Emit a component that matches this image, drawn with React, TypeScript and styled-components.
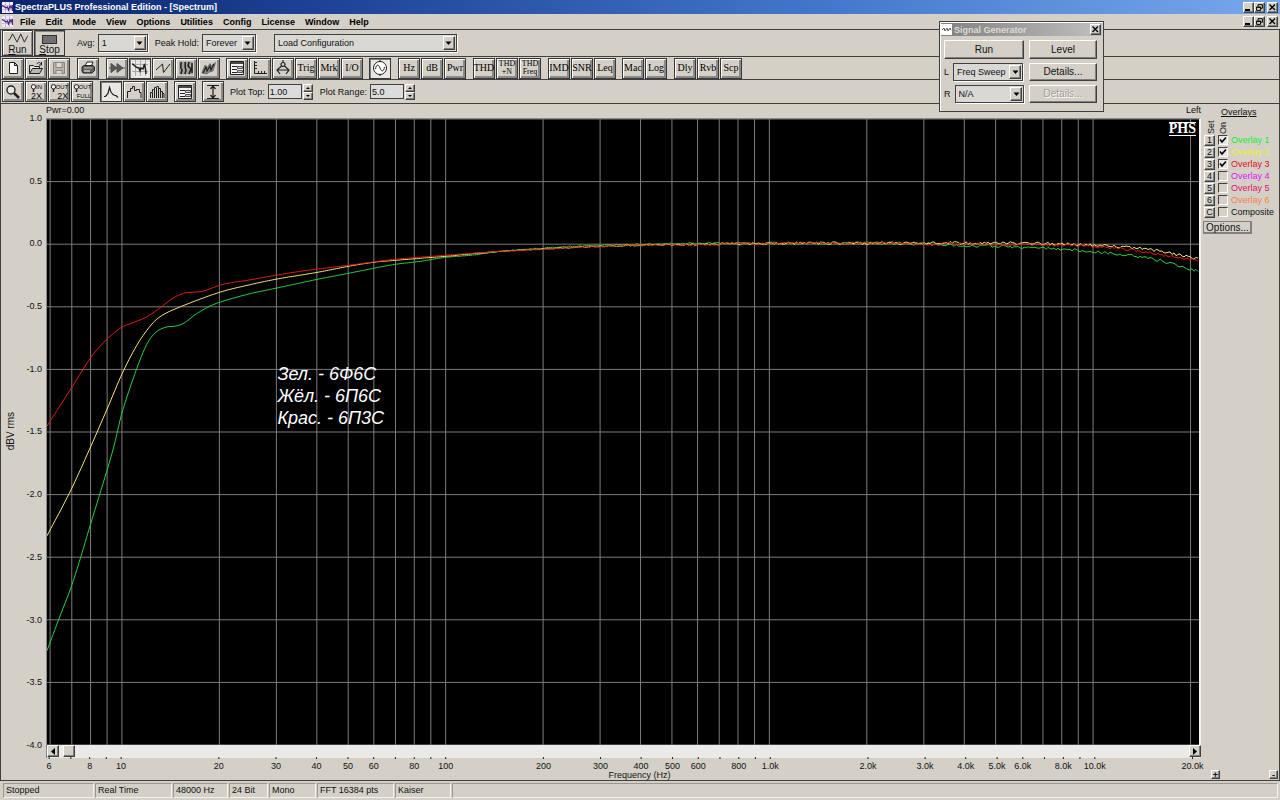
import React, { useState } from 'react';
import styled, { createGlobalStyle, css } from 'styled-components';

const face = '#d4d0c8';
const dark = '#404040';
const shade = '#808080';

const GlobalStyle = createGlobalStyle`
  * { box-sizing: border-box; }
  body { margin: 0; background: ${face}; }
  body, button, input, select {
    font-family: "Liberation Sans", Arial, sans-serif;
    font-size: 9px;
    line-height: 12px;
    color: #101010;
  }
  button, input, select { margin: 0; padding: 0; border-radius: 0; }
  svg { display: block; }
`;

const raised = css`
  border: 1px solid;
  border-color: #fff ${dark} ${dark} #fff;
  box-shadow: inset -1px -1px 0 ${shade};
  background: ${face};
`;
const sunken = css`
  border: 1px solid;
  border-color: ${dark} #fff #fff ${dark};
  background: ${face};
`;

const Shell = styled.div`
  position: relative;
  display: flex;
  flex-direction: column;
  min-height: 100vh;
  background: ${face};
`;
const TitleBar = styled.header`
  display: flex;
  align-items: center;
  height: 14px;
  padding: 0 2px;
  gap: 2px;
  color: #fff;
  background: linear-gradient(90deg, #0a246a, #1d4296 25%, #4478cc 65%, #78a8ec);
`;
const Title = styled.h1`
  flex: 1;
  margin: 0;
  font: bold 9px/14px "Liberation Sans", Arial, sans-serif;
`;
const MenuBar = styled.nav`
  display: flex;
  align-items: center;
  height: 15px;
  padding: 0 2px;
`;
const Menus = styled.div`
  display: flex;
  flex: 1;
  gap: 10px;
  padding-left: 7px;
`;
const MenuItem = styled.button`
  border: 0;
  background: none;
  color: #000;
  font-weight: bold;
`;
const Controls = styled.div`
  display: flex;
`;
const WinButton = styled.button`
  ${raised}
  display: grid;
  place-items: center;
  width: 11px;
  height: 11px;
  &:last-child { margin-left: 2px; }
`;
const Bars = styled.div`
  border-left: 1px solid ${dark};
  border-right: 1px solid ${dark};
`;
const Bar = styled.div<{ $h: number }>`
  display: flex;
  align-items: center;
  height: ${p => p.$h}px;
  padding-left: 1px;
  border-top: 1px solid ${dark};
`;
const Group = styled.div<{ $after?: number }>`
  display: flex;
  gap: 1px;
  margin-right: ${p => p.$after ?? 7}px;
`;
const Tool = styled.button<{ $on?: boolean }>`
  display: flex;
  flex-direction: column;
  align-items: center;
  justify-content: center;
  width: 22px;
  height: 21px;
  border: 1px solid #383838;
  background: ${p => (p.$on ? '#e9e7e3' : face)};
  box-shadow: ${p => (p.$on ? `inset 1px 1px 0 ${shade}` : `inset 1px 1px 0 #fff, inset -2px -2px 0 #8c8a86`)};
`;
const WideTool = styled(Tool)`
  justify-content: space-between;
  width: 31px;
  height: 26px;
  padding-top: 2px;
  background: ${face};
  box-shadow: ${p => (p.$on ? `inset 1px 1px 0 ${shade}` : 'inset 1px 1px 0 #fff, inset -1px -1px 0 #8c8a86')};
  font-size: 10px;
  line-height: 11px;
`;
const Glyph = styled.span<{ $small?: boolean }>`
  font-family: "Liberation Serif", "Times New Roman", serif;
  font-size: ${p => (p.$small ? 8 : 10)}px;
  line-height: ${p => (p.$small ? 8 : 12)}px;
  color: #000;
`;
const Field = styled.label<{ $gap?: number; $after?: number }>`
  display: flex;
  align-items: center;
  gap: ${p => p.$gap ?? 3}px;
  margin-right: ${p => p.$after ?? 7}px;
  white-space: nowrap;
`;
const Combo = styled.span<{ $w: number }>`
  display: grid;
  grid-template-columns: 1fr 12px;
  align-items: center;
  width: ${p => p.$w}px;
  height: 18px;
  padding: 1px;
  border: 1px solid ${dark};
  box-shadow: 1px 1px 0 #fff;
  background: #d9d8d5;
  select {
    grid-area: 1 / 1 / 2 / 3;
    width: 100%;
    height: 14px;
    padding-left: 2px;
    border: 0;
    appearance: none;
    background: none;
  }
`;
const Drop = styled.span`
  ${raised}
  grid-area: 1 / 2;
  display: grid;
  place-items: center;
  height: 14px;
  pointer-events: none;
`;
const NumBox = styled.input`
  width: 34px;
  height: 15px;
  padding-left: 1px;
  border: 1px solid ${dark};
  background: #dcdcdc;
`;
const Spinner = styled.span`
  display: flex;
  flex-direction: column;
  margin-left: -2px;
  button {
    ${raised}
    display: grid;
    place-items: center;
    width: 10px;
    height: 8px;
  }
`;

const Floating = styled.section`
  position: absolute;
  top: 21px;
  right: 176px;
  width: 165px;
  padding: 1px;
  border: 1px solid ${dark};
  box-shadow: inset 1px 1px 0 #fff;
  background: ${face};
`;
const FloatTitle = styled.header`
  display: flex;
  align-items: center;
  gap: 2px;
  height: 13px;
  padding-right: 1px;
  background: linear-gradient(90deg, #808080, #c0c0c0);
  h2 {
    flex: 1;
    margin: 0;
    font-size: 9px;
    line-height: 12px;
    color: #dedbd4;
  }
`;
const FloatBody = styled.div`
  display: grid;
  grid-template-columns: 80px 68px;
  gap: 4px 5px;
  padding: 4px 3px 7px;
`;
const Push = styled.button<{ $h: number }>`
  ${raised}
  height: ${p => p.$h}px;
  font-size: 10px;
  &:disabled { color: #a09c94; text-shadow: 1px 1px 0 #fff; }
`;

const Main = styled.main`
  display: flex;
  flex: 1;
  border: 1px solid ${dark};
`;
const Chart = styled.div`
  flex: 1;
  display: grid;
  grid-template-columns: 45px 1fr;
  grid-template-rows: 14px minmax(300px, 1fr) 13px 22px;
`;
const PlotHead = styled.div`
  grid-column: 2;
  display: flex;
  justify-content: space-between;
  line-height: 13px;
`;
const YAxis = styled.div`
  grid-row: 2;
  display: flex;
  justify-content: space-between;
  margin: -6px 0;
`;
const YTitle = styled.div`
  align-self: center;
  writing-mode: vertical-rl;
  transform: rotate(180deg);
  padding-right: 4px;
  font-size: 10px;
`;
const YLabels = styled.div`
  display: flex;
  flex-direction: column;
  justify-content: space-between;
  padding-right: 4px;
  text-align: right;
`;
const Plot = styled.div`
  position: relative;
  border: solid #8a8a88;
  border-width: 1px 0 0 1px;
  border-right: 2px solid #f4f2ee;
  background: #000;
  > svg { position: absolute; inset: 0; width: 100%; height: 100%; }
`;
const Badge = styled.div`
  position: absolute;
  top: 3px;
  right: 3px;
  border: solid #fff;
  border-width: 1px 0;
  font: bold 14px/12px "Liberation Serif", "Times New Roman", serif;
  color: #fff;
  background: #000;
`;
const Legend = styled.div`
  position: absolute;
  top: 39%;
  left: 20%;
  font: italic 18px/22px "Liberation Sans", Arial, sans-serif;
  color: #fff;
`;
const ScrollBar = styled.div`
  grid-column: 2;
  display: flex;
  border-left: 1px solid ${shade};
  background: #eceae6;
  button {
    ${raised}
    display: grid;
    place-items: center;
    width: 12px;
    height: 12px;
  }
  input {
    flex: 1;
    min-width: 0;
    height: 12px;
    appearance: none;
    background: none;
  }
  input::-webkit-slider-thumb {
    ${raised}
    appearance: none;
    width: 12px;
    height: 12px;
  }
`;
const XAxis = styled.div`
  grid-column: 2;
  display: flex;
  flex-direction: column;
  svg { width: 100%; height: 13px; overflow: visible; }
  text { fill: #101010; }
`;
const XTitle = styled.div`
  padding-left: 32px;
  line-height: 8px;
  text-align: center;
`;

const Side = styled.aside`
  display: flex;
  flex-direction: column;
  width: 78px;
  padding: 3px 1px 1px 2px;
`;
const SideTitle = styled.h2`
  margin: 0 0 0 18px;
  font-size: 9px;
  font-weight: normal;
  line-height: 11px;
  text-decoration: underline;
`;
const SideHeads = styled.div`
  display: flex;
  padding-left: 2px;
  height: 16px;
  span {
    writing-mode: vertical-rl;
    transform: rotate(180deg);
    line-height: 12px;
  }
`;
const OverlayRow = styled.div<{ $c: string }>`
  display: flex;
  align-items: center;
  gap: 3px;
  height: 12px;
  padding-left: 1px;
  white-space: nowrap;
  label { color: ${p => p.$c}; }
`;
const SetButton = styled.button`
  ${raised}
  width: 11px;
  height: 11px;
  line-height: 9px;
`;
const Check = styled.input`
  ${sunken}
  appearance: none;
  flex: none;
  width: 10px;
  height: 10px;
  &:checked {
    background: #e8e6e2 url("data:image/svg+xml,%3Csvg xmlns='http://www.w3.org/2000/svg' viewBox='0 0 8 8'%3E%3Cpath d='M1 3.5L3 6L7 1.5' fill='none' stroke='%23000' stroke-width='1.6'/%3E%3C/svg%3E");
  }
`;
const OptionsButton = styled.button`
  ${raised}
  align-self: flex-start;
  width: 49px;
  height: 13px;
  margin-top: 3px;
  font-size: 10px;
  line-height: 10px;
  outline: 1px solid ${shade};
  outline-offset: -1px;
`;
const Zoomers = styled.div`
  display: flex;
  justify-content: space-between;
  margin-top: auto;
  padding-left: 8px;
  button {
    ${raised}
    width: 9px;
    height: 9px;
    line-height: 6px;
    font-weight: bold;
  }
`;
const Status = styled.footer`
  display: flex;
  gap: 1px;
  padding: 2px 2px 2px 3px;
`;
const Cell = styled.div<{ $w?: number }>`
  ${p => (p.$w ? `width: ${p.$w}px;` : 'flex: 1;')}
  height: 15px;
  padding-left: 2px;
  border: 1px solid;
  border-color: #9a9690 #f4f2ee #f4f2ee #9a9690;
  line-height: 13px;
  white-space: nowrap;
`;

const Arrow = ({ d }: { d: string }) => (
  <svg width="7" height="5" viewBox="0 0 7 5"><path d={d} fill="#000" /></svg>
);
const Down = () => <Arrow d="M0.5 0.5H6.5L3.5 4Z" />;

const Select = ({ w, options, label }: { w: number; options: string[]; label?: string }) => (
  <Combo $w={w}>
    <select aria-label={label}>{options.map(o => <option key={o}>{o}</option>)}</select>
    <Drop><Down /></Drop>
  </Combo>
);

const AppIcon = () => (
  <svg width="11" height="11" viewBox="0 0 11 11">
    <rect width="11" height="11" fill="#f0eaf6" />
    <path d="M0 3.5H11M0 7.5H11M3.5 0V11M7.5 0V11" stroke="#c4b8dc" />
    <path d="M0 3.500L2 4.500L4 6L5.500 5L6.500 8L8 4L9 6L10.500 3V9" fill="none" stroke="#50207c" strokeWidth="1.200" />
  </svg>
);

const Cross = () => (
  <svg width="7" height="7" viewBox="0 0 7 7"><path d="M.5 .5L6 6M6 .5L.5 6" stroke="#000" strokeWidth="1.4" /></svg>
);
const WindowControls = () => (
  <Controls>
    <WinButton aria-label="Minimize"><svg width="7" height="7"><path d="M0 6H5" stroke="#000" strokeWidth="2" /></svg></WinButton>
    <WinButton aria-label="Restore">
      <svg width="7" height="7" viewBox="0 0 7 7"><path d="M2 2V.7H6.4V4.3H5M.6 3H4.6V6.4H.6ZM.6 3.3H4.6" fill="none" stroke="#000" /></svg>
    </WinButton>
    <WinButton aria-label="Close"><Cross /></WinButton>
  </Controls>
);

const iconPaths: Record<string, React.ReactNode> = {
  New: <path d="M4.500 2.500H9.500L12.500 5.500V13.500H4.500ZM9.500 2.500V5.500H12.500" fill="#fff" />,
  Open: <><path d="M1.500 13.500V5.500H5.500L6.500 6.500H11.500V8.500" fill="#e4e2dc" /><path d="M1.500 13.500L4.500 8.500H14.500L11.500 13.500Z" fill="#b8b6b0" /><path d="M9 4C10 2 12 2 13 4M13.500 2V5H11" /></>,
  Save: <g stroke="#88857f"><path d="M2.500 2.500H13.500V13.500H2.500Z" fill="#b4b1aa" /><path d="M5 2.500H11V7.500H5ZM5 13.500V10.500H11V13.500" fill="#dddad4" /></g>,
  Print: <><path d="M5 6L7 2H13L11.500 6" fill="#fff" /><path d="M2 7L4 5.500H13L14.500 7V10.500L12 13H3L2 11Z" fill="#606060" /><path d="M4 8H12" stroke="#bbb" /><path d="M4 11H10" stroke="#fff" /></>,
  Play: <><path d="M0 8H16" stroke="#505050" /><path d="M2 3.500L8 8L2 12.500ZM8 3.500L14 8L8 12.500Z" fill="#585858" stroke="#505050" /></>,
  Spectrum: <><path d="M0 4.500H16M0 11.500H16M3.500 0V16M8.500 0V16M13.500 0V16" stroke="#aaa" /><path d="M0 4C2 4 3 7 5 7.500L7 8L8 11L9 8L11 9L12.500 4L13.500 9L14 14" strokeWidth="1.500" /></>,
  Time: <path d="M1 10L7.500 4L8.500 12.500L15 4" />,
  Sonogram: <><path d="M1 1.500H15V14.500H1Z" fill="#a4a29c" stroke="none" /><path d="M3 2C4 5 1 7 4 10L3 14M7 2C8 5 6 7 8 10L7 14M11 2L10 6L13 9L11 14M14 3V13" strokeWidth="1.600" /></>,
  Surface: <><path d="M1 13L4 5L6 8L9 3.500L10 6L14.500 2.500L12 11L8 12L6 14Z" fill="#888" stroke="#707070" /><path d="M2 13L5 7L6 11L9 6L10 10L13 4" strokeWidth="1.200" /></>,
  Panel: <><path d="M1.500 1.500H14.500V14.500H1.500Z" fill="#f4f4f4" /><path d="M2 3H14" strokeWidth="2" stroke="#484848" /><path d="M3 6.500H8M3 9.500H8M3 12.500H8" /><path d="M8.500 6.500H13.500V8.500H8.500ZM8.500 10.500H13.500V12.500H8.500Z" fill="#ccc" stroke="#505050" /></>,
  Axes: <path d="M2.500 1V13.500H15M2.500 2.500H5M2.500 5.500H5M2.500 8.500H5M6.500 13V11M9.500 13V11M12.500 13V11" />,
  Calibrate: <path d="M6 4.500A2 2 0 1 1 10 4.500A2 2 0 1 1 6 4.500M8 0V2M6.500 6L2 10L5 14M9.500 6L14 10L11 14M2 10H14" strokeWidth="1.200" />,
  Generator: <><circle cx="8" cy="8" r="6.500" fill="#fff" /><path d="M3.500 9C4.500 4 6.500 4 8 8S11.500 12 12.500 7M8 0V2M8 14V16" /></>,
  Zoom: <><circle cx="6" cy="6" r="4" fill="#e8e6e2" strokeWidth="1.300" /><path d="M9 9L14 14" strokeWidth="2.500" /></>,
  Peak: <path d="M1 12.500H2.500L5 9.500L6.500 3.500L8 8L10 10.500L12 11.500H13L15 13.500" strokeWidth="1.200" />,
  Steps: <path d="M1.500 14V7.500H4.500V4.500H6.500V2.500H8.500V6.500H10.500V5.500H13.500V8.500H15V14" />,
  Bars: <path d="M1.500 14V8.500H3.500V14M3.500 8V5.500H5.500V14M5.500 5V3.500H7.500V14M7.500 2.500H9.500V14M9.500 4.500H11.500V14M11.500 7.500H13.500V14M13.500 9.500H15V14" />,
  Fit: <path d="M2 1.500H14M2 14.500H14M8 2V14M5.500 5L8 2L10.500 5M5.500 11L8 14L10.500 11" strokeWidth="1.200" />,
};
const Icon = ({ name }: { name: string }) => (
  <svg width="16" height="16" viewBox="0 0 16 16" fill="none" stroke="#202020">{iconPaths[name]}</svg>
);
const IconTool = ({ name, on }: { name: string; on?: boolean }) => (
  <Tool $on={on} aria-label={name}><Icon name={name} /></Tool>
);
const ZoomGlyph = styled.span`
  display: grid;
  grid-template-columns: 6px auto;
  align-items: center;
  font-size: 6px;
  line-height: 7px;
  color: #000;
  span:last-child {
    grid-column: 1 / 3;
    text-align: right;
    line-height: 8px;
  }
`;
const ZoomFactor = styled.span<{ $s: number }>`
  font-size: ${p => p.$s}px;
`;
const ZoomTool = ({ top, bottom }: { top: string; bottom: string }) => (
  <Tool>
    <ZoomGlyph>
      <svg width="7" height="8" viewBox="0 0 7 8"><circle cx="3.500" cy="2.800" r="2.200" fill="#eee" stroke="#222" /><path d="M3.500 5V8" stroke="#222" strokeWidth="1.500" /></svg>
      <span>{top}</span>
      <ZoomFactor $s={bottom.length > 2 ? 6 : 9}>{bottom}</ZoomFactor>
    </ZoomGlyph>
  </Tool>
);
const TextTool = ({ children }: { children: string }) => {
  const lines = children.split(' ');
  return <Tool>{lines.map(l => <Glyph key={l} $small={lines.length > 1}>{l}</Glyph>)}</Tool>;
};

const Spin = ({ label, value }: { label: string; value: string }) => (
  <Field>
    {label}
    <NumBox defaultValue={value} />
    <Spinner>
      <button aria-label={`${label} up`}><svg width="4" height="2"><path d="M0 2L2 0L4 2Z" /></svg></button>
      <button aria-label={`${label} down`}><svg width="4" height="2"><path d="M0 0L2 2L4 0Z" /></svg></button>
    </Spinner>
  </Field>
);

/* Plot space: 324 units per decade with 10 Hz at 75, 125.4 units per dB with 1.0 dB at 0. */
const W = 1153;
const H = 627;
const fx = (f: number) => 75 + 324 * Math.log10(f / 10);
const gridFreqs = [6, 7, 8, 9, 10, 20, 30, 40, 50, 60, 70, 80, 90, 100, 200, 300, 400, 500, 600, 700, 800, 900,
  1000, 2000, 3000, 4000, 5000, 6000, 7000, 8000, 9000, 10000, 20000];
const labelled: Record<number, string> = {
  6: '6', 8: '8', 10: '10', 20: '20', 30: '30', 40: '40', 50: '50', 60: '60', 80: '80', 100: '100', 200: '200',
  300: '300', 400: '400', 500: '500', 600: '600', 800: '800', 1000: '1.0k', 2000: '2.0k', 3000: '3.0k',
  4000: '4.0k', 5000: '5.0k', 6000: '6.0k', 8000: '8.0k', 10000: '10.0k', 20000: '20.0k',
};
const yTicks = ['1.0', '0.5', '0.0', '-0.5', '-1.0', '-1.5', '-2.0', '-2.5', '-3.0', '-3.5', '-4.0'];

type Pt = [number, number];
const green: Pt[] = [[0, 533], [12, 501], [26, 464], [44, 405], [66, 332], [75, 295], [90, 250], [100, 226],
  [109, 214], [119, 209], [128, 208], [137, 205], [149, 196], [163, 188], [173, 184], [201, 176], [229, 170],
  [271, 161], [302, 155], [327, 150], [349, 146], [374, 143], [399, 139], [424, 137], [454, 133],
  [494, 130], [554, 127], [654, 125], [724, 125], [854, 125], [914, 127], [954, 128], [1014, 131], [1054, 134],
  [1104, 140], [1124, 145], [1152, 153]];
const yellow: Pt[] = [[0, 418], [24, 372], [44, 328], [61, 289], [75, 256], [90, 227], [104, 207], [114, 198], [130, 190],
  [173, 174], [201, 167], [229, 161], [271, 154], [302, 148], [327, 144], [349, 142], [399, 138],
  [454, 133], [494, 131], [554, 128], [654, 126], [754, 125], [994, 125], [1047, 127], [1094, 130], [1124, 135], [1152, 141]];
const red: Pt[] = [[0, 308], [25, 269], [44, 239], [54, 227], [61, 220], [75, 209], [90, 203], [101, 198], [114, 189],
  [126, 180], [137, 175], [146, 174], [156, 173], [173, 167], [187, 164], [201, 162], [229, 157], [254, 153],
  [302, 147], [349, 141], [399, 137], [454, 133], [494, 131], [554, 128], [654, 126], [754, 125], [954, 126],
  [1047, 128], [1094, 133], [1124, 138], [1152, 143]];

/* Hermite curve through the samples, with measurement noise growing towards the treble. */
const trace = (pts: Pt[], seed: number) => {
  const out: string[] = [];
  let s = seed;
  for (let x = 0; x <= 1152; x += 2) {
    let i = 0;
    while (i < pts.length - 2 && pts[i + 1][0] < x) i++;
    const a = pts[Math.max(i - 1, 0)], b = pts[i], c = pts[i + 1], d = pts[Math.min(i + 2, pts.length - 1)];
    const w = c[0] - b[0];
    const t = (x - b[0]) / w;
    const m0 = ((c[1] - a[1]) / (c[0] - a[0])) * w;
    const m1 = ((d[1] - b[1]) / (d[0] - b[0])) * w;
    const y = (2 * t ** 3 - 3 * t ** 2 + 1) * b[1] + (t ** 3 - 2 * t ** 2 + t) * m0
      + (3 * t ** 2 - 2 * t ** 3) * c[1] + (t ** 3 - t ** 2) * m1;
    s = (s * 16807) % 2147483647;
    const amp = Math.max(0, Math.min(1, (x - 350) / 500)) * 3;
    out.push(`${x} ${(y - 0.5 + (s / 2147483647 - 0.5) * amp).toFixed(1)}`);
  }
  return `M${out.join('L')}`;
};
const traces = [
  { color: '#28d044', d: trace(green, 11) },
  { color: '#f8e478', d: trace(yellow, 5231) },
  { color: '#e01c14', d: trace(red, 977) },
];
const pct = (f: number) => `${(fx(f) / W) * 100}%`;

const overlays = [
  { key: '1', name: 'Overlay 1', color: '#10f028', on: true },
  { key: '2', name: 'Overlay 2', color: '#f0f020', on: true },
  { key: '3', name: 'Overlay 3', color: '#e01018', on: true },
  { key: '4', name: 'Overlay 4', color: '#e010f0', on: false },
  { key: '5', name: 'Overlay 5', color: '#e01068', on: false },
  { key: '6', name: 'Overlay 6', color: '#f88040', on: false },
  { key: 'C', name: 'Composite', color: '#101010', on: false },
];
const cells: [string, number][] = [['Stopped', 91], ['Real Time', 77], ['48000 Hz', 55], ['24 Bit', 39], ['Mono', 47],
  ['FFT 16384 pts', 77], ['Kaiser', 56]];

const OverlayItem = ({ item }: { item: (typeof overlays)[number] }) => {
  const [on, setOn] = useState(item.on);
  const id = `overlay-${item.key}`;
  return (
    <OverlayRow $c={item.color}>
      <SetButton aria-label={`Set ${item.name}`}>{item.key}</SetButton>
      <Check id={id} type="checkbox" checked={on} onChange={e => setOn(e.target.checked)} />
      <label htmlFor={id}>{item.name}</label>
    </OverlayRow>
  );
};

export default function App() {
  return (
    <Shell>
      <GlobalStyle />
      <TitleBar>
        <AppIcon />
        <Title>SpectraPLUS Professional Edition - [Spectrum]</Title>
        <WindowControls />
      </TitleBar>
      <MenuBar>
        <AppIcon />
        <Menus>
          {['File', 'Edit', 'Mode', 'View', 'Options', 'Utilities', 'Config', 'License', 'Window', 'Help'].map(m => (
            <MenuItem key={m}>{m}</MenuItem>
          ))}
        </Menus>
        <WindowControls />
      </MenuBar>
      <Bars>
        <Bar $h={27}>
          <Group $after={12}>
            <WideTool>
              <svg width="24" height="12" viewBox="0 0 24 12"><path d="M1 8L3 7L6 1L11 10L15 1L19 10L22 4L23 3" fill="none" stroke="#202020" /></svg>
              <span><u>R</u>un</span>
            </WideTool>
            <WideTool $on>
              <svg width="15" height="12"><rect x=".5" y="2.5" width="14" height="8" fill="#707070" stroke="#303030" /></svg>
              <span><u>S</u>top</span>
            </WideTool>
          </Group>
          <Field>Avg:<Select w={50} options={['1']} /></Field>
          <Field $after={18}>Peak Hold:<Select w={54} options={['Forever']} /></Field>
          <Select w={183} options={['Load Configuration']} label="Configuration" />
        </Bar>
        <Bar $h={23}>
          <Group><IconTool name="New" /><IconTool name="Open" /><IconTool name="Save" /></Group>
          <Group><IconTool name="Print" /></Group>
          <Group $after={6}>
            <IconTool name="Play" /><IconTool name="Spectrum" on /><IconTool name="Time" /><IconTool name="Sonogram" /><IconTool name="Surface" />
          </Group>
          <Group $after={6}>
            <IconTool name="Panel" /><IconTool name="Axes" /><IconTool name="Calibrate" />
            <TextTool>Trig</TextTool><TextTool>Mrk</TextTool><TextTool>I/O</TextTool>
          </Group>
          <Group><IconTool name="Generator" on /></Group>
          <Group><TextTool>Hz</TextTool><TextTool>dB</TextTool><TextTool>Pwr</TextTool></Group>
          <Group><TextTool>THD</TextTool><TextTool>THD +N</TextTool><TextTool>THD Freq</TextTool></Group>
          <Group $after={6}><TextTool>IMD</TextTool><TextTool>SNR</TextTool><TextTool>Leq</TextTool></Group>
          <Group><TextTool>Mac</TextTool><TextTool>Log</TextTool></Group>
          <Group><TextTool>Dly</TextTool><TextTool>Rvb</TextTool><TextTool>Scp</TextTool></Group>
        </Bar>
        <Bar $h={24}>
          <Group>
            <IconTool name="Zoom" />
            <ZoomTool top="IN" bottom="2X" /><ZoomTool top="OUT" bottom="2X" /><ZoomTool top="OUT" bottom="FULL" />
          </Group>
          <Group $after={6}><IconTool name="Peak" on /><IconTool name="Steps" /><IconTool name="Bars" /></Group>
          <Group $after={6}><IconTool name="Panel" /></Group>
          <Group $after={6}><IconTool name="Fit" /></Group>
          <Spin label="Plot Top:" value="1.00" />
          <Spin label="Plot Range:" value="5.0" />
        </Bar>
      </Bars>
      <Main>
        <Chart>
          <PlotHead><span>Pwr=0.00</span><span>Left</span></PlotHead>
          <YAxis>
            <YTitle>dBV rms</YTitle>
            <YLabels>{yTicks.map(t => <span key={t}>{t}</span>)}</YLabels>
          </YAxis>
          <Plot>
            <svg viewBox={`0 0 ${W} ${H}`} preserveAspectRatio="none" fill="none">
              <g stroke="#7c7c7c" shapeRendering="crispEdges">
                {gridFreqs.map(f => <path key={f} d={`M${fx(f)} 0V${H}`} vectorEffect="non-scaling-stroke" />)}
                {yTicks.map((t, i) => <path key={t} d={`M0 ${(i * H) / 10}H${W}`} vectorEffect="non-scaling-stroke" />)}
              </g>
              {traces.map(t => <path key={t.color} d={t.d} stroke={t.color} vectorEffect="non-scaling-stroke" />)}
            </svg>
            <Badge>PHS</Badge>
            <Legend>Зел. - 6Ф6С<br />Жёл. - 6П6С<br />Крас. - 6П3С</Legend>
          </Plot>
          <ScrollBar>
            <button aria-label="Scroll left"><svg width="4" height="7"><path d="M4 0V7L0 3.500Z" /></svg></button>
            <input type="range" min="0" max="1000" defaultValue="4" aria-label="Frequency position" />
            <button aria-label="Scroll right"><svg width="4" height="7"><path d="M0 0V7L4 3.500Z" /></svg></button>
          </ScrollBar>
          <XAxis>
            <svg>
              {gridFreqs.map(f => <line key={f} x1={pct(f)} x2={pct(f)} y1="-1" y2="1" stroke="#202020" />)}
              {gridFreqs.filter(f => labelled[f]).map(f => (
                <text key={f} x={pct(f)} y="11" textAnchor="middle">{labelled[f]}</text>
              ))}
            </svg>
            <XTitle>Frequency (Hz)</XTitle>
          </XAxis>
        </Chart>
        <Side>
          <SideTitle>Overlays</SideTitle>
          <SideHeads><span>Set</span><span>On</span></SideHeads>
          {overlays.map(o => <OverlayItem key={o.key} item={o} />)}
          <OptionsButton>Options...</OptionsButton>
          <Zoomers><button>+</button><button>-</button></Zoomers>
        </Side>
      </Main>
      <Status>
        {cells.map(([t, w]) => <Cell key={t} $w={w}>{t}</Cell>)}
        <Cell />
      </Status>
      <Floating aria-label="Signal Generator">
        <FloatTitle>
          <svg width="11" height="11" viewBox="0 0 11 11"><rect width="11" height="11" fill="#fff" /><path d="M1 6L3 4L4 7L6 4L7 7L9 4L10 6" fill="none" stroke="#555" /></svg>
          <h2>Signal Generator</h2>
          <WinButton aria-label="Close generator"><Cross /></WinButton>
        </FloatTitle>
        <FloatBody>
          <Push $h={19}>Run</Push>
          <Push $h={19}>Level</Push>
          <Field $gap={4} $after={0}>L<Select w={70} options={['Freq Sweep']} /></Field>
          <Push $h={18}>Details...</Push>
          <Field $gap={4} $after={0}>R<Select w={70} options={['N/A']} /></Field>
          <Push $h={18} disabled>Details...</Push>
        </FloatBody>
      </Floating>
    </Shell>
  );
}
